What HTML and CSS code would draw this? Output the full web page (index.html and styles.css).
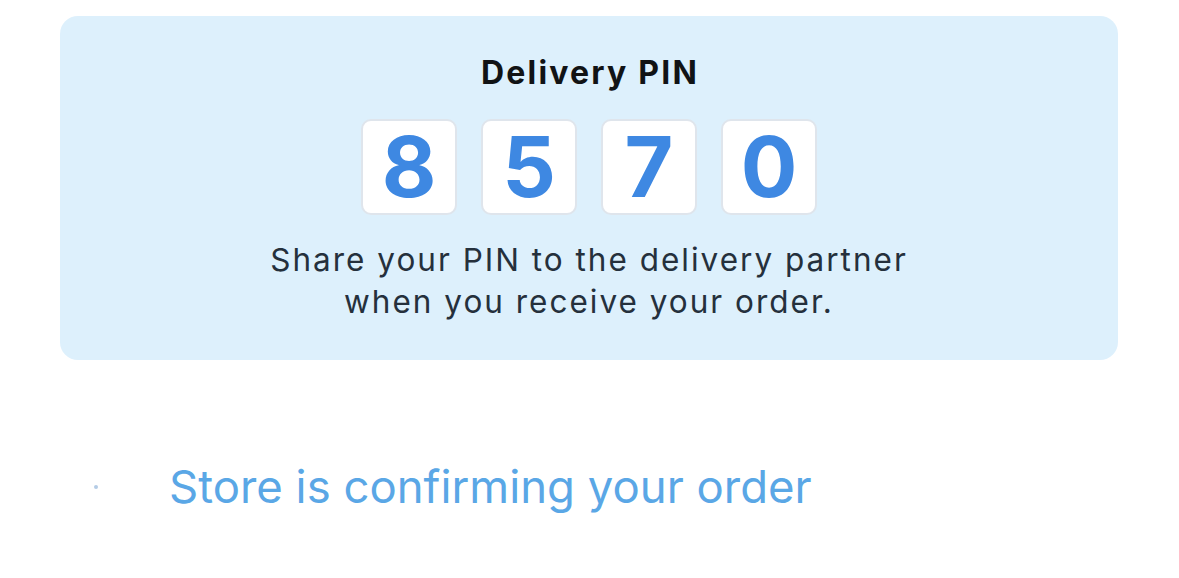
FILE: index.html
```html
<!DOCTYPE html>
<html lang="en">
<head>
<meta charset="utf-8">
<link rel="stylesheet" href="styles.css">
</head>
<body>
<main class="page">
  <section class="pin-card">
    <h1 class="pin-title">Delivery PIN</h1>
    <div class="pin-digits">
      <span class="digit">8</span>
      <span class="digit">5</span>
      <span class="digit">7</span>
      <span class="digit">0</span>
    </div>
    <p class="pin-note">Share your PIN to the delivery partner<br>when you receive your order.</p>
  </section>
  <div class="status-row">
    <span class="status-dot"></span>
    <span class="status-text">Store is confirming your order</span>
  </div>
</main>
</body>
</html>
```
FILE: styles.css
```css
html, body {
  margin: 0;
  padding: 0;
  background: #ffffff;
}
body {
  font-family: Inter, "Noto Sans", sans-serif;
  width: 1179px;
  height: 578px;
  overflow: hidden;
}
.page {
  padding: 16px 61px 0 60px;
}
.pin-card {
  background: #ddf0fc;
  border-radius: 18px;
  height: 344px;
  box-sizing: border-box;
  padding-top: 37px;
  display: flex;
  flex-direction: column;
  align-items: center;
}
.pin-title {
  margin: 0;
  font-size: 32px;
  line-height: 40px;
  font-weight: 700;
  color: #111315;
  letter-spacing: 2.2px;
  padding-left: 2px;
}
.pin-digits {
  display: flex;
  gap: 24px;
  margin-top: 26px;
}
.digit {
  width: 96px;
  height: 96px;
  box-sizing: border-box;
  background: #ffffff;
  border: 2px solid #dfe5ec;
  border-radius: 10px;
  display: flex;
  align-items: center;
  justify-content: center;
  font-size: 84px;
  font-weight: 700;
  color: #3e88e2;
  line-height: 1;
}
.pin-note {
  margin: 24px 0 0;
  font-size: 31.5px;
  line-height: 42px;
  text-align: center;
  color: #25303c;
  letter-spacing: 2px;
}
.status-row {
  display: flex;
  align-items: center;
  margin-top: 100px;
  padding-left: 34px;
}
.status-dot {
  width: 4px;
  height: 4px;
  border-radius: 50%;
  background: #b4cce6;
}
.status-text {
  margin-left: 71px;
  font-size: 45.5px;
  line-height: 54px;
  color: #5aa7e6;
}
```
